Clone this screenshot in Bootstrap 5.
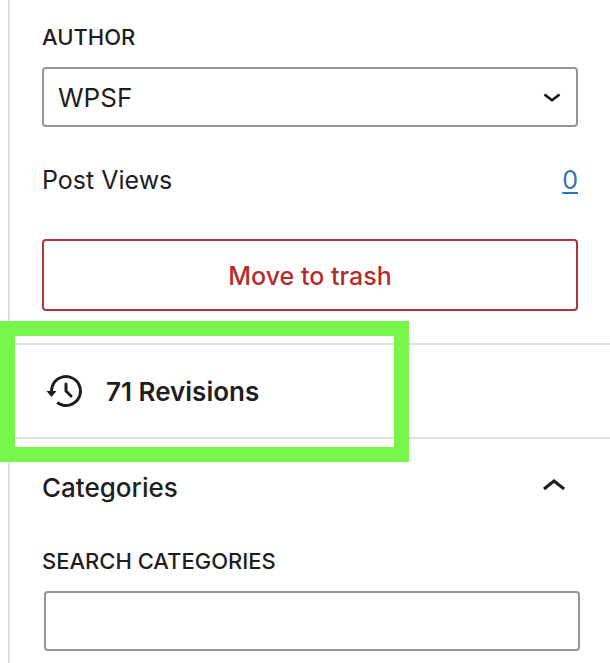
<!DOCTYPE html>
<html lang="en">
<head>
<meta charset="utf-8">
<meta name="viewport" content="width=device-width, initial-scale=1">
<title>Post settings</title>
<link href="https://cdn.jsdelivr.net/npm/bootstrap@5.3.0/dist/css/bootstrap.min.css" rel="stylesheet">
<style>
  body { font-family: Inter, "Liberation Sans", sans-serif; font-size: 26px; line-height: 36px; color: #1e1e1e; background: #fff; }
  .settings-panel { margin-left: 8px; border-left: 2px solid #e0e0e0; }
  .panel-part { padding-left: 32px; padding-right: 32px; }
  .summary-part { padding-top: 22px; padding-bottom: 32px; }
  .field-label { font-size: 22px; line-height: 30px; font-weight: 500; margin-bottom: 15px; text-transform: uppercase; }
  .field-box { height: 60px; padding: 2px 14px 0; font-size: 26px; line-height: 36px; color: #1e1e1e; border: 2px solid #949494; border-radius: 4px; }
  .author-select {
    background-image: url("data:image/svg+xml,%3Csvg xmlns='http://www.w3.org/2000/svg' viewBox='0 0 18 12'%3E%3Cpath d='M1.5 3.5L9 9.2l7.500-5.700' fill='none' stroke='%23000' stroke-width='2.500'/%3E%3C/svg%3E");
    background-size: 18px 12px; background-position: right 15px center;
  }
  .views-row { font-size: 25px; margin-top: 35px; margin-bottom: 41px; }
  .views-link { color: #2e74b0; text-underline-offset: 3px; text-decoration-thickness: 2px; }
  .trash-btn { height: 72px; padding-top: 8px; font-size: 25px; line-height: 36px; font-weight: 500; color: #b32d2e; border: 2px solid #a93a35; border-radius: 4px; }
  .revisions-part { border-top: 2px solid #e0e0e0; border-bottom: 2px solid #e0e0e0; }
  .plain-btn { font-size: 26px; line-height: 36px; color: #1e1e1e; border: 0; border-radius: 0; }
  .plain-btn span { padding-top: 2px; }
  .revisions-btn { height: 92px; font-weight: 600; }
  .highlight-frame { position: absolute; left: -10px; top: -24px; bottom: -25px; width: 409px; border: 15px solid #78f54c; pointer-events: none; }
  .categories-btn { height: 96px; font-weight: 500; }
  .search-part { padding-top: 11px; padding-bottom: 12px; }
  .search-wrap { margin-left: 2px; margin-right: -2px; }
</style>
</head>
<body>
<aside class="settings-panel min-vh-100">
  <section class="panel-part summary-part">
    <label class="field-label d-block" for="author">Author</label>
    <select class="form-select field-box author-select" id="author">
      <option selected>WPSF</option>
    </select>
    <div class="views-row d-flex justify-content-between">
      <span>Post Views</span>
      <a class="views-link" href="#">0</a>
    </div>
    <button type="button" class="btn trash-btn w-100">Move to trash</button>
  </section>

  <section class="revisions-part position-relative">
    <button type="button" class="btn plain-btn revisions-btn panel-part py-0 w-100 d-flex align-items-center gap-3">
      <svg width="48" height="48" viewBox="0 0 24 24" fill="currentColor" aria-hidden="true"><path d="M5.5 12h1.75l-2.5 3-2.5-3H4a8 8 0 113.134 6.35l.907-1.194A6.5 6.5 0 105.5 12zm9.53 1.97l-2.28-2.28V8.5a.75.75 0 00-1.5 0V12a.747.747 0 00.218.529l2.502 2.502a.75.75 0 101.06-1.061z"/></svg>
      <span>71 Revisions</span>
    </button>
    <div class="highlight-frame"></div>
  </section>

  <section>
    <button type="button" class="btn plain-btn categories-btn panel-part py-0 w-100 d-flex align-items-center justify-content-between" aria-expanded="true">
      <span>Categories</span>
      <svg width="48" height="48" viewBox="0 0 24 24" fill="currentColor" aria-hidden="true"><path d="M6.5 12.4L12 8l5.5 4.4-.9 1.2L12 10l-4.5 3.6-1-1.2z"/></svg>
    </button>
    <div class="panel-part search-part">
      <label class="field-label d-block" for="category-search">Search Categories</label>
      <div class="search-wrap">
        <input type="text" class="form-control field-box" id="category-search">
      </div>
    </div>
  </section>
</aside>
<script src="https://cdn.jsdelivr.net/npm/bootstrap@5.3.0/dist/js/bootstrap.bundle.min.js"></script>
</body>
</html>
